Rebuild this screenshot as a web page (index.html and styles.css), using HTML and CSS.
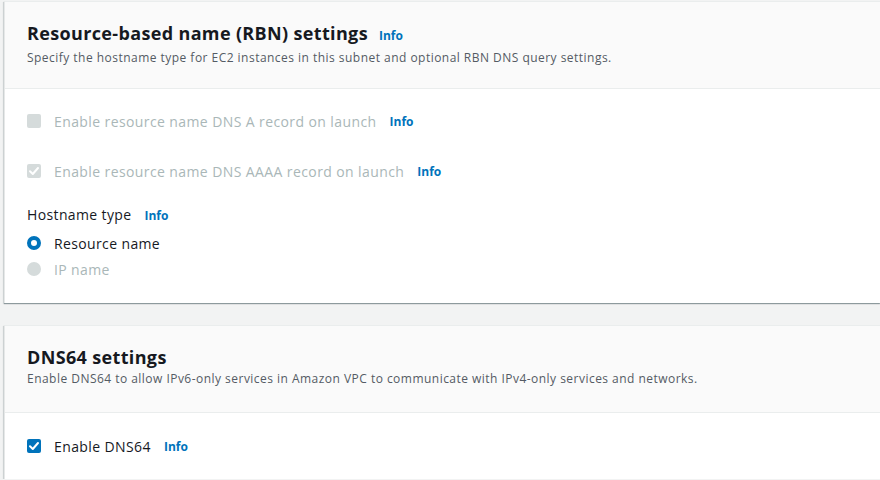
FILE: index.html
```html
<!DOCTYPE html>
<html>
<head>
<meta charset="utf-8">
<link rel="stylesheet" href="styles.css">
</head>
<body>
<div class="page">
  <section class="card card-first">
    <header class="card-header">
      <h2 class="title">Resource-based name (RBN) settings <a class="info info-title">Info</a></h2>
      <p class="desc">Specify the hostname type for EC2 instances in this subnet and optional RBN DNS query settings.</p>
    </header>
    <div class="card-body">
      <div class="check-row disabled">
        <span class="box"></span>
        <span class="label">Enable resource name DNS A record on launch</span>
        <a class="info">Info</a>
      </div>
      <div class="check-row disabled second">
        <span class="box checked">
          <svg viewBox="0 0 14 14" width="14" height="14"><path d="M3 7.3 L5.8 10 L11 4" fill="none" stroke="#fff" stroke-width="2" stroke-linecap="round" stroke-linejoin="round"/></svg>
        </span>
        <span class="label">Enable resource name DNS AAAA record on launch</span>
        <a class="info">Info</a>
      </div>
      <div class="field">
        <div class="field-label">Hostname type <a class="info">Info</a></div>
        <div class="radio-row">
          <span class="radio on"></span>
          <span class="radio-label">Resource name</span>
        </div>
        <div class="radio-row disabled">
          <span class="radio off"></span>
          <span class="radio-label">IP name</span>
        </div>
      </div>
    </div>
  </section>

  <section class="card card-second">
    <header class="card-header">
      <h2 class="title">DNS64 settings</h2>
      <p class="desc">Enable DNS64 to allow IPv6-only services in Amazon VPC to communicate with IPv4-only services and networks.</p>
    </header>
    <div class="card-body body-short">
      <div class="check-row">
        <span class="box active">
          <svg viewBox="0 0 14 14" width="14" height="14"><path d="M3 7.3 L5.8 10 L11 4" fill="none" stroke="#fff" stroke-width="2" stroke-linecap="round" stroke-linejoin="round"/></svg>
        </span>
        <span class="label enabled">Enable DNS64</span>
        <a class="info">Info</a>
      </div>
    </div>
  </section>
</div>
</body>
</html>
```

FILE: styles.css
```css
html, body {
  margin: 0;
  padding: 0;
  background: #f2f3f3;
  font-family: "Open Sans", "Noto Sans", "Liberation Sans", sans-serif;
  color: #16191f;
}

.page {
  padding: 1px 0 0 4px;
  display: flex;
  flex-direction: column;
  gap: 22px;
}

.card {
  background: #fff;
  border-left: 1px solid #e6e8e8;
  border-top: 1px solid #eaeded;
  box-shadow: 0 1px 1px 0 rgba(0, 28, 36, 0.35), -1px 1px 1px 0 rgba(0, 28, 36, 0.1);
}

.card-header {
  background: #fafafa;
  border-bottom: 1px solid #eaeded;
  padding: 19px 22px 20px 22px;
  height: 47px;
}

.title {
  margin: 0;
  font-size: 18px;
  font-weight: 700;
  line-height: 24px;
  letter-spacing: 0.35px;
  display: flex;
  align-items: baseline;
}

.desc {
  margin: 1px 0 0 0;
  font-size: 12px;
  line-height: 18px;
  color: #545b64;
  letter-spacing: 0.47px;
}

.info {
  color: #0073bb;
  font-weight: 700;
  font-size: 12px;
  margin-left: 13px;
  letter-spacing: 0;
  cursor: pointer;
}

.info-title {
  margin-left: 11px;
}

.card-body {
  padding: 22px 22px 0 22px;
  height: 192px;
}

.body-short {
  padding-top: 23px;
  height: 43px;
}

.check-row {
  display: flex;
  align-items: center;
  height: 20px;
}

.check-row.second {
  margin-top: 30px;
}

.box {
  width: 14px;
  height: 14px;
  border-radius: 2px;
  background: #d5dbdb;
  display: inline-flex;
  margin-right: 13px;
  flex: none;
}

.box.active {
  background: #0073bb;
}

.label {
  font-size: 14px;
  color: #16191f;
  letter-spacing: 0.4px;
}

.disabled .label,
.disabled .radio-label {
  color: #aab7b8;
}

.field {
  margin-top: 24px;
}

.field-label {
  font-size: 14px;
  line-height: 20px;
  display: flex;
  align-items: baseline;
  letter-spacing: 0.37px;
}

.radio-row {
  display: flex;
  align-items: center;
  height: 20px;
  margin-top: 7px;
}

.radio-row.disabled {
  margin-top: 6px;
}

.radio {
  width: 14px;
  height: 14px;
  border-radius: 50%;
  box-sizing: border-box;
  margin-right: 13px;
  flex: none;
}

.radio.on {
  border: 4px solid #0073bb;
  background: #fff;
}

.radio.off {
  background: #d5dbdb;
}

.radio-label {
  font-size: 14px;
  letter-spacing: 0.37px;
}
```
